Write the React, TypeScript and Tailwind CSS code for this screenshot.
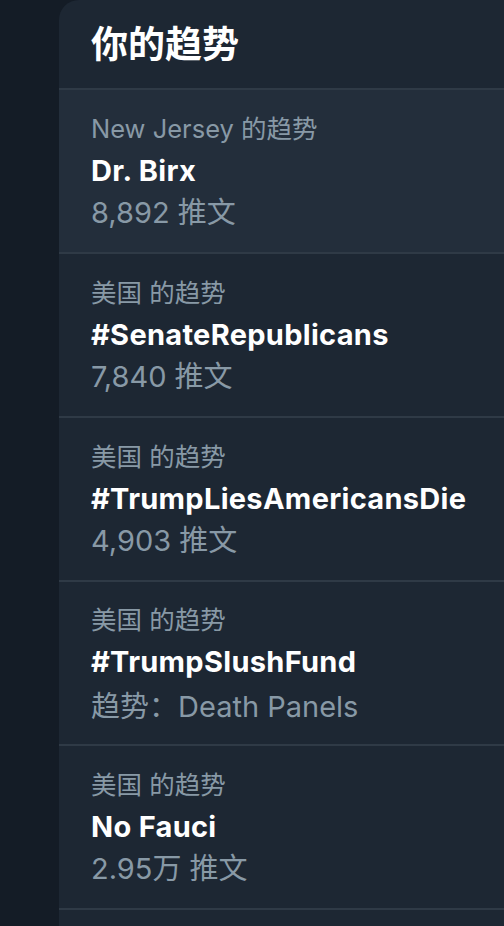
import React from 'react'

interface Trend {
  place: string
  title: string
  meta: React.ReactNode
  active?: boolean
}

const cjk = { fontFamily: '"Noto Sans CJK SC", sans-serif' }

const trends: Trend[] = [
  { place: 'New Jersey 的趋势', title: 'Dr. Birx', meta: '8,892 推文', active: true },
  { place: '美国 的趋势', title: '#SenateRepublicans', meta: '7,840 推文' },
  { place: '美国 的趋势', title: '#TrumpLiesAmericansDie', meta: '4,903 推文' },
  {
    place: '美国 的趋势',
    title: '#TrumpSlushFund',
    meta: (
      <>
        <span style={cjk}>趋势：</span>Death Panels
      </>
    ),
  },
  { place: '美国 的趋势', title: 'No Fauci', meta: '2.95万 推文' },
]

const font = {
  fontFamily: 'Inter, "Noto Sans CJK SC", "Liberation Sans", sans-serif',
}

const TrendRow: React.FC<{ trend: Trend }> = ({ trend }) => (
  <div
    className={
      'h-[164px] shrink-0 border-b-2 border-[#2f3a46] px-8 flex flex-col justify-center ' +
      (trend.active ? 'bg-[#232e3b]' : '')
    }
  >
    <div className="text-[25.5px] leading-[42px] text-[#8899a6] whitespace-nowrap">{trend.place}</div>
    <div className="text-[29px] leading-[42px] font-bold tracking-[0.3px] text-white whitespace-nowrap">
      {trend.title}
    </div>
    <div className="text-[29px] leading-[42px] text-[#8899a6] whitespace-nowrap">{trend.meta}</div>
  </div>
)

export default function App() {
  return (
    <div className="w-[504px] h-[926px] overflow-hidden bg-[#141c26] flex" style={font}>
      <div className="w-[59px] shrink-0" />
      <div className="flex-1 min-w-0 bg-[#1d2733] rounded-tl-[20px] flex flex-col">
        {/* Header */}
        <div className="h-[90px] shrink-0 border-b-2 border-[#2f3a46] px-8 flex items-center">
          <h2 className="text-[37px] font-bold text-white leading-none">你的趋势</h2>
        </div>

        {/* Trends */}
        {trends.map((t, i) => (
          <TrendRow key={i} trend={t} />
        ))}
        <div className="flex-1" />
      </div>
    </div>
  )
}
